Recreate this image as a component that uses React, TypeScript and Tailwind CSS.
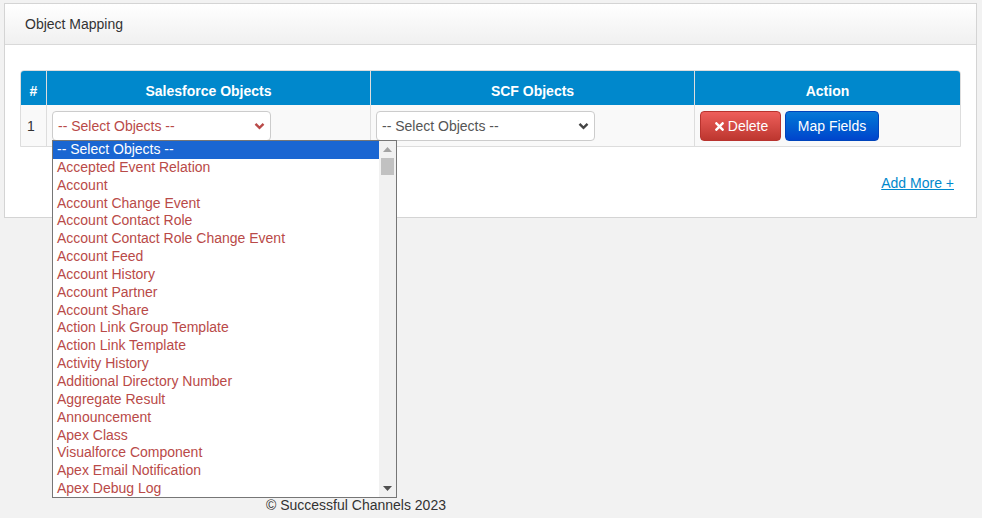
import { FaTimes } from 'react-icons/fa'

const OBJECTS = [
    '-- Select Objects --',
    'Accepted Event Relation',
    'Account',
    'Account Change Event',
    'Account Contact Role',
    'Account Contact Role Change Event',
    'Account Feed',
    'Account History',
    'Account Partner',
    'Account Share',
    'Action Link Group Template',
    'Action Link Template',
    'Activity History',
    'Additional Directory Number',
    'Aggregate Result',
    'Announcement',
    'Apex Class',
    'Visualforce Component',
    'Apex Email Notification',
    'Apex Debug Log',
]

function Chevron({ color }: { color: string }) {
    return (
        <svg width="11" height="8" viewBox="0 0 11 8" className="shrink-0">
            <path d="M1.5 1.8 L5.5 5.8 L9.5 1.8" fill="none" stroke={color} strokeWidth="2.4" />
        </svg>
    )
}

function FakeSelect({ error }: { error?: boolean }) {
    return (
        <div className="flex h-[30px] w-[219px] items-center justify-between rounded-[4px] border border-[#cccccc] bg-white pl-[5px] pr-[5px] pt-[1px]">
            <span className={error ? 'text-[#b94a48]' : 'text-[#555555]'}>-- Select Objects --</span>
            <Chevron color={error ? '#b94a48' : '#444444'} />
        </div>
    )
}

function ObjectList() {
    return (
        <div className="absolute left-[5px] top-[35px] z-10 flex h-[358px] w-[345px] border border-[#767676] bg-white">
            <div className="flex-1 overflow-hidden">
                {OBJECTS.map((o, i) => (
                    <div
                        key={o}
                        className={
                            i === 0
                                ? 'h-[17.85px] whitespace-nowrap bg-[#1a66d2] pl-[4px] leading-[17.85px] text-white'
                                : 'h-[17.85px] whitespace-nowrap pl-[4px] leading-[17.85px] text-[#b94a48]'
                        }
                    >
                        {o}
                    </div>
                ))}
            </div>
            {/* scrollbar */}
            <div className="flex w-[17px] flex-col bg-[#f1f1f1]">
                <div className="flex h-[17px] items-center justify-center">
                    <svg width="9" height="5" viewBox="0 0 9 5"><path d="M0 5 L4.5 0 L9 5 Z" fill="#a3a3a3" /></svg>
                </div>
                <div className="mx-[2px] h-[17px] bg-[#c1c1c1]" />
                <div className="flex-1" />
                <div className="flex h-[17px] items-center justify-center">
                    <svg width="9" height="5" viewBox="0 0 9 5"><path d="M0 0 L4.5 5 L9 0 Z" fill="#505050" /></svg>
                </div>
            </div>
        </div>
    )
}

export default function App() {
    return (
        <div className="flex min-h-[518px] flex-col bg-[#f2f2f2] pt-[3px] font-['Liberation_Sans',Arial,sans-serif] text-[14px] text-[#333333]">
            <div className="ml-[4px] mr-[5px] border border-[#d4d4d4] bg-white">
                <div className="flex h-[41px] items-center border-b border-[#d9d9d9] bg-gradient-to-b from-white to-[#f0f0f0] pl-[20px] pt-[1px]">
                    Object Mapping
                </div>

                <div className="px-[15px] pb-[23px] pt-[25px]">
                    <div className="rounded-t-[4px] border border-[#dddddd]">
                        <div className="flex h-[34px] rounded-t-[3px] bg-[#0088cc] pt-[6px] font-bold text-white">
                            <div className="flex w-[25px] items-center justify-center">#</div>
                            <div className="-mt-[6px] flex w-[324px] items-center justify-center border-l border-[#dddddd] pt-[6px]">Salesforce Objects</div>
                            <div className="-mt-[6px] flex w-[324px] items-center justify-center border-l border-[#dddddd] pt-[6px]">SCF Objects</div>
                            <div className="-mt-[6px] flex flex-1 items-center justify-center border-l border-[#dddddd] pt-[6px]">Action</div>
                        </div>
                        <div className="flex h-[41px] bg-[#f9f9f9]">
                            <div className="flex w-[25px] items-center pl-[6px] pt-[1px]">1</div>
                            <div className="relative flex w-[324px] items-center border-l border-[#dddddd] pl-[5px]">
                                <FakeSelect error />
                                <ObjectList />
                            </div>
                            <div className="flex w-[324px] items-center border-l border-[#dddddd] pl-[5px]">
                                <FakeSelect />
                            </div>
                            <div className="flex flex-1 items-center gap-[4px] border-l border-[#dddddd] pl-[5px]">
                                <button className="flex h-[30px] w-[81px] items-center justify-center gap-[2px] rounded-[4px] border border-[#b8332e] bg-gradient-to-b from-[#ee5f5b] to-[#bd362f] pt-[1px] text-white">
                                    <FaTimes className="text-[13px]" />
                                    Delete
                                </button>
                                <button className="flex h-[30px] w-[94px] items-center justify-center rounded-[4px] border border-[#0044bb] bg-gradient-to-b from-[#0a78d6] to-[#0044cc] pt-[1px] text-white">
                                    Map Fields
                                </button>
                            </div>
                        </div>
                    </div>

                    <div className="mt-[26px] flex justify-end pr-[7px]">
                        <a href="#" className="text-[#0088cc] underline">Add More +</a>
                    </div>
                </div>
            </div>

            <div className="mt-auto w-[712px] pb-[3px] text-center leading-[20px]">© Successful Channels 2023</div>
        </div>
    )
}
